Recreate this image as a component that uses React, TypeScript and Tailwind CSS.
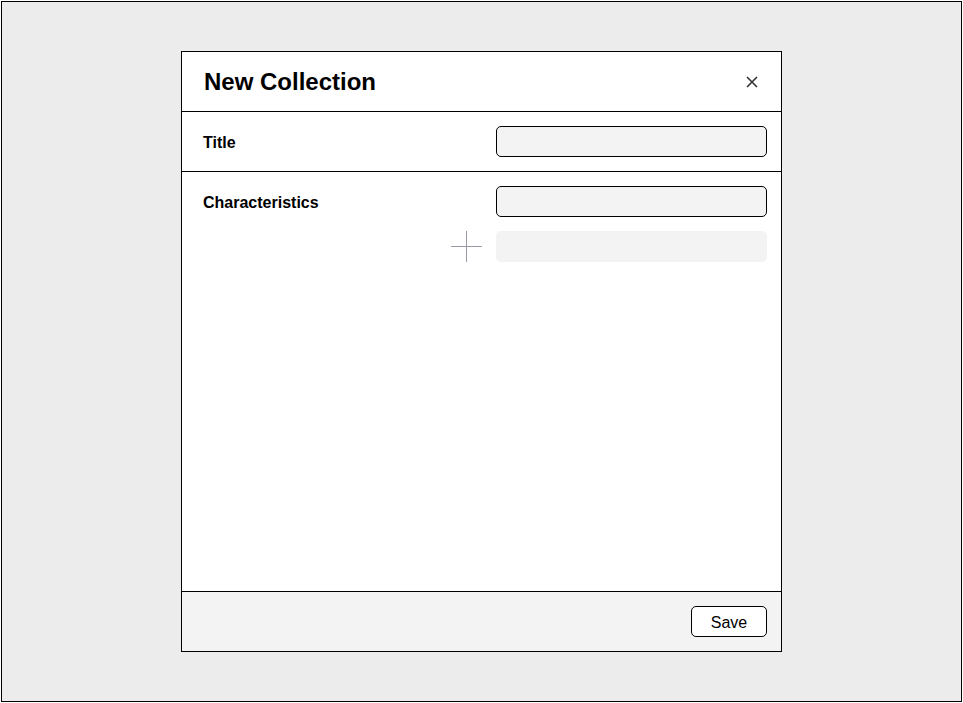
export default function App() {
  return (
    <div
      className="m-px w-[961px] h-[701px] border border-black bg-[#ececec] pl-[179px] pt-[49px]"
      style={{ fontFamily: '"Liberation Sans", Arial, sans-serif' }}
    >
      <div className="w-[601px] h-[601px] border border-black bg-white flex flex-col">
        {/* header */}
        <div className="h-[60px] shrink-0 border-b border-black flex items-center justify-between pl-[22px] pr-[23px]">
          <h1 className="text-[24px] font-bold text-black leading-none">New Collection</h1>
          <button className="w-3 h-3 flex items-center justify-center">
            <svg width="12" height="12" viewBox="0 0 12 12">
              <path d="M1 1 L11 11 M11 1 L1 11" stroke="#333" strokeWidth="1.6" />
            </svg>
          </button>
        </div>

        {/* title row */}
        <div className="h-[60px] shrink-0 border-b border-black flex items-center justify-between pl-[21px] pr-[14px]">
          <span className="text-base font-bold text-black pt-[2px]">Title</span>
          <input className="w-[271px] h-[31px] rounded-[5px] border border-black bg-[#f3f3f3] outline-none px-2 text-sm" />
        </div>

        {/* characteristics */}
        <div className="flex-1 border-b border-black flex justify-between pl-[21px] pr-[14px] pt-[14px]">
          <div className="h-[31px] flex items-center">
            <span className="text-base font-bold text-black pt-[2px]">Characteristics</span>
          </div>
          <div className="flex flex-col gap-[14px] items-end">
            <input className="w-[271px] h-[31px] rounded-[5px] border border-black bg-[#f3f3f3] outline-none px-2 text-sm" />
            <div className="flex items-center gap-[14px]">
              <svg width="31" height="31" viewBox="0 0 31 31">
                <path d="M15.5 0 V31 M0 15.5 H31" stroke="#9a9aa6" strokeWidth="1" />
              </svg>
              <div className="w-[271px] h-[31px] rounded-[5px] bg-[#f3f3f3]" />
            </div>
          </div>
        </div>

        {/* footer */}
        <div className="h-[59px] shrink-0 bg-[#f3f3f3] flex items-center justify-end pr-[14px]">
          <button className="w-[76px] h-[31px] rounded-[5px] border border-black bg-white text-base text-black pt-[2px]">
            Save
          </button>
        </div>
      </div>
    </div>
  );
}
